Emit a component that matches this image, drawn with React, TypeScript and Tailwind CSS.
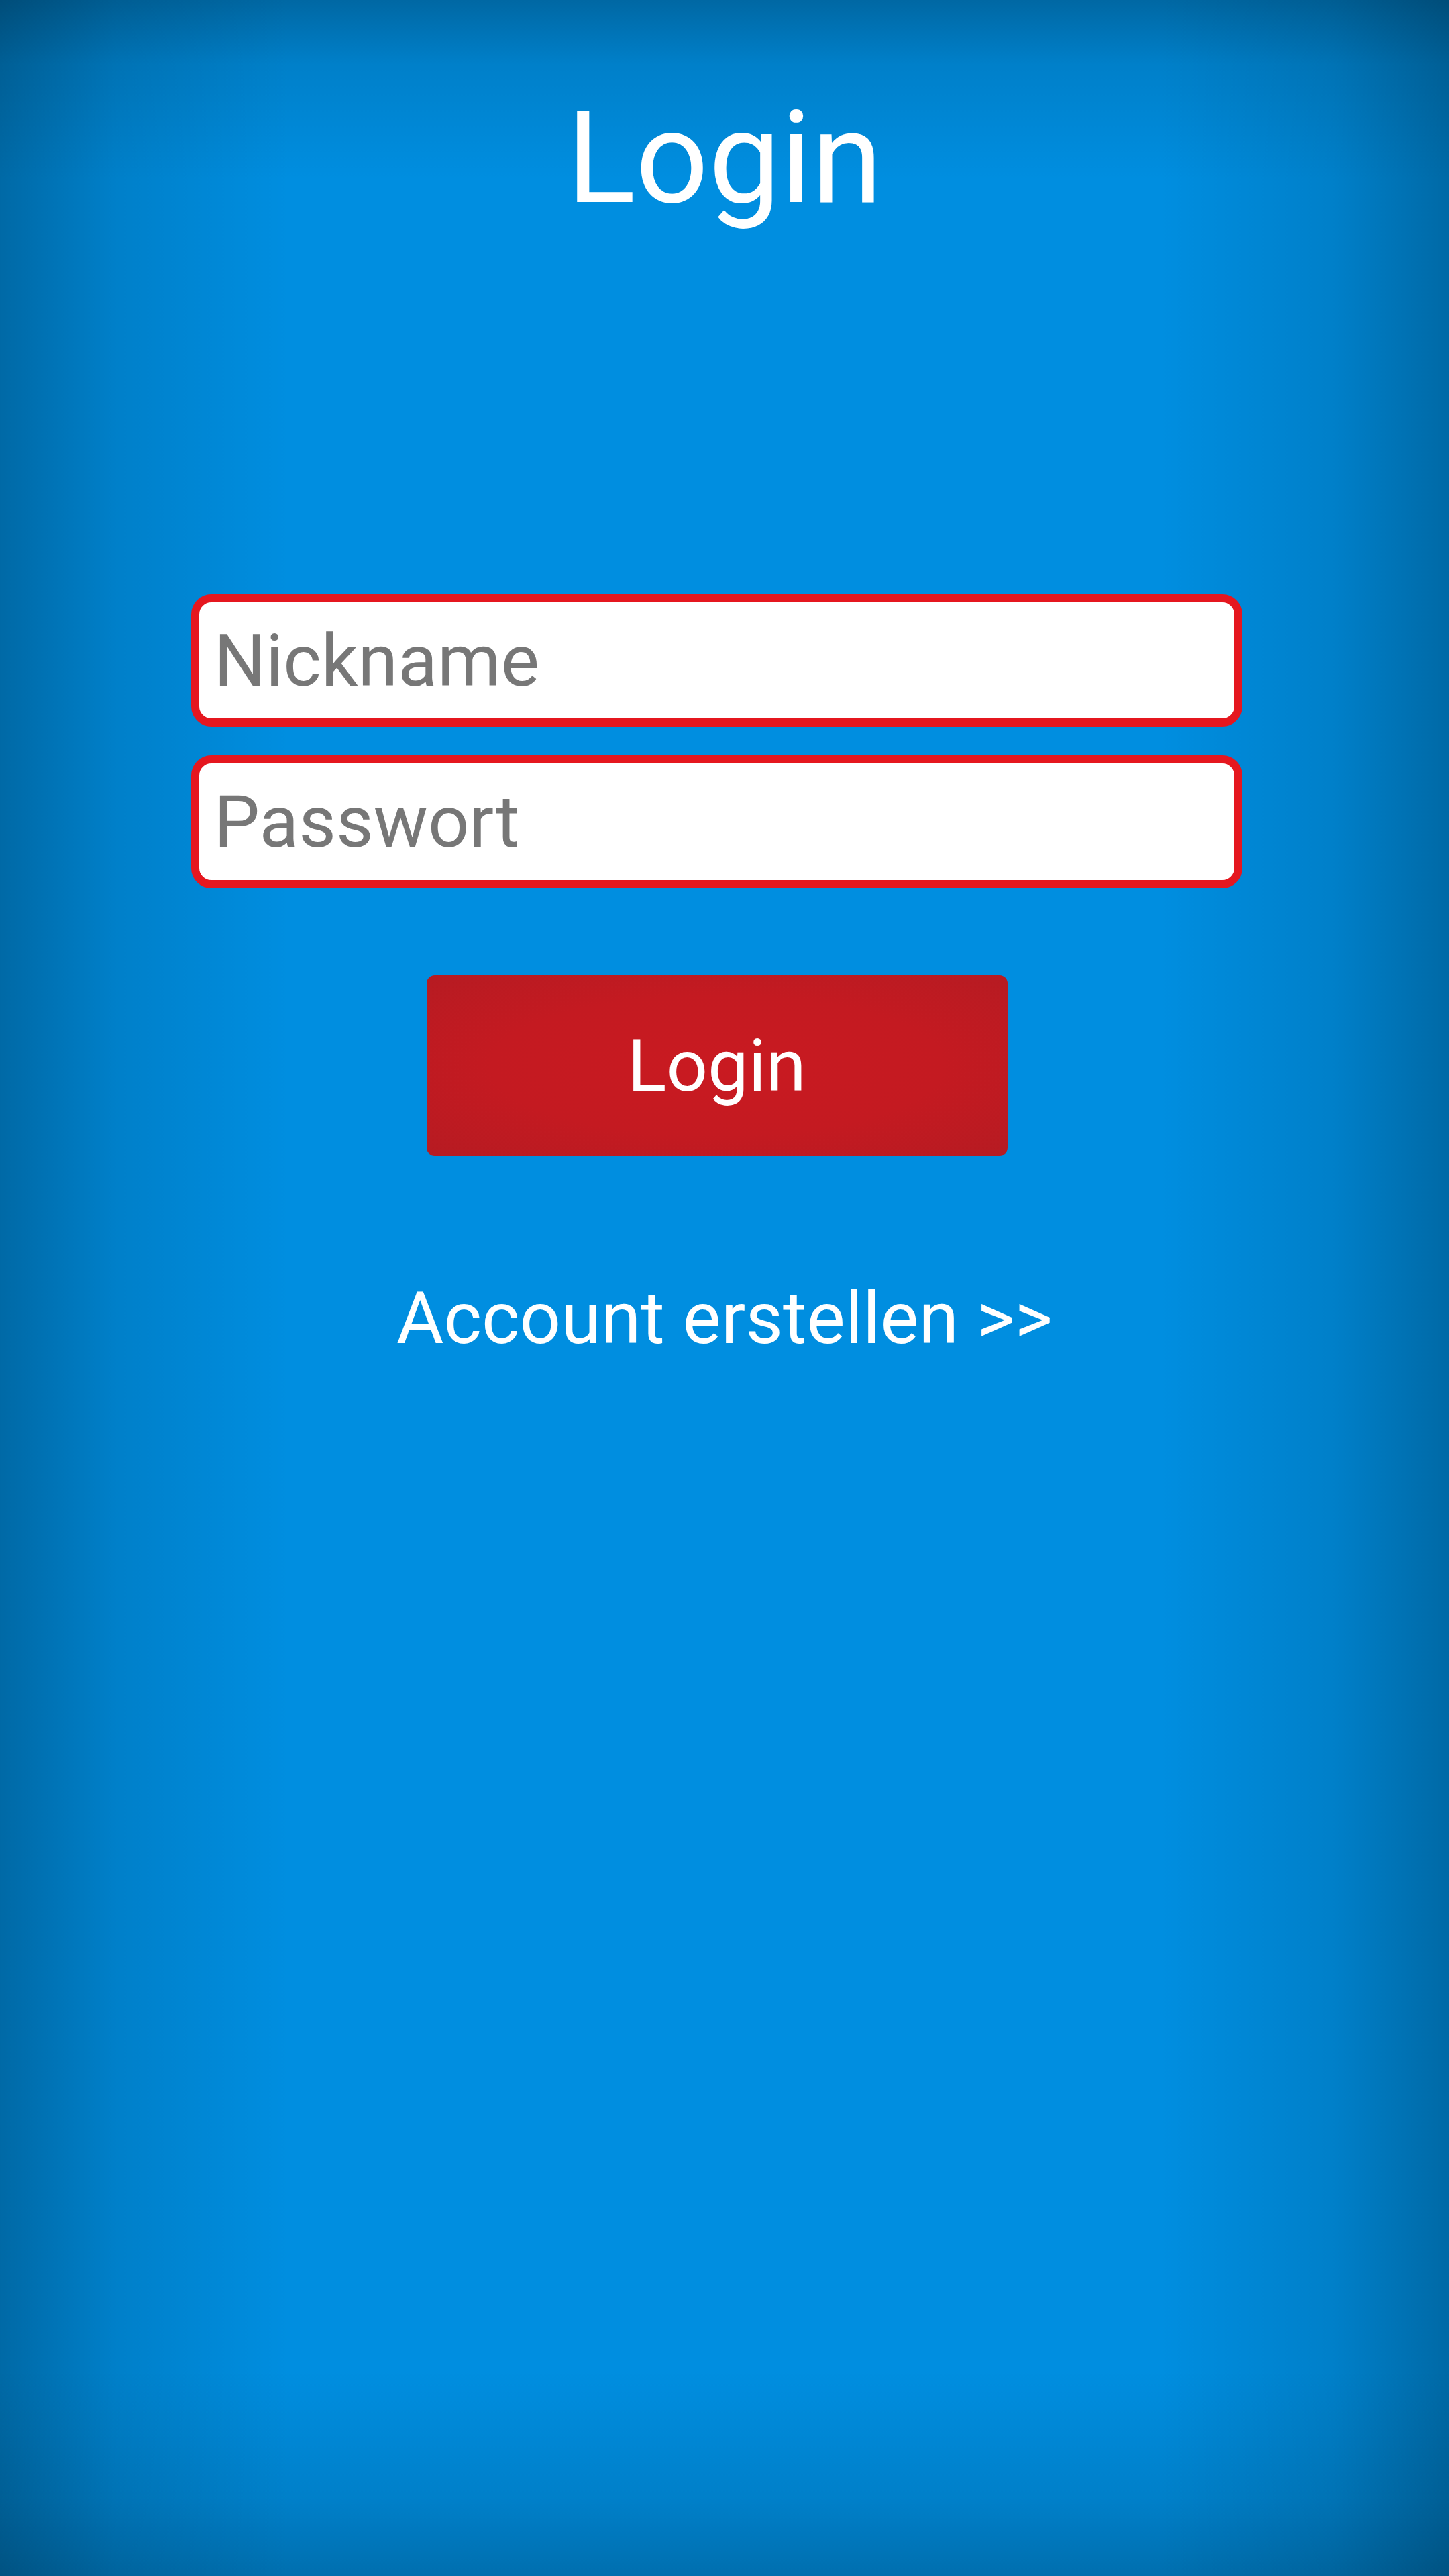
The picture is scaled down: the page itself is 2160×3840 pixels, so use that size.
export default function App() {
  return (
    <div className="min-h-[3840px] w-full bg-[#008ee0] bg-[linear-gradient(to_right,rgba(0,0,0,0.26),rgba(0,0,0,0.1)_8%,transparent_20%,transparent_80%,rgba(0,0,0,0.1)_92%,rgba(0,0,0,0.26)),linear-gradient(to_bottom,rgba(0,0,0,0.27),rgba(0,0,0,0.1)_2.5%,transparent_7%,transparent_92%,rgba(0,0,0,0.1)_97%,rgba(0,0,0,0.22))] font-['Roboto',sans-serif] flex flex-col">
      {/* Title */}
      <h1 className="mt-[141px] text-center text-[191px] leading-none font-normal text-white">
        Login
      </h1>

      {/* Form */}
      <div className="mt-[554px] ml-[285px] w-[1567px] flex flex-col">
        <input
          type="text"
          placeholder="Nickname"
          className="h-[197px] w-full rounded-[30px] border-[12px] border-[#e5171f] bg-white pl-[22px] text-[108px] text-[#333] outline-none placeholder:text-[#777777]"
        />
        <input
          type="password"
          placeholder="Passwort"
          className="mt-[43px] h-[198px] w-full rounded-[30px] border-[12px] border-[#e5171f] bg-white pl-[22px] text-[108px] text-[#333] outline-none placeholder:text-[#777777]"
        />

        <button className="mt-[130px] self-center h-[269px] w-[866px] rounded-[12px] bg-[radial-gradient(ellipse_at_center,#c91a21_0%,#c41a21_55%,#b61b22_100%)] text-[108px] leading-none text-white">
          Login
        </button>
      </div>

      {/* Register link */}
      <a
        href="#register"
        className="mt-[188px] self-center text-[108px] leading-none text-white"
      >
        Account erstellen &gt;&gt;
      </a>
    </div>
  );
}
